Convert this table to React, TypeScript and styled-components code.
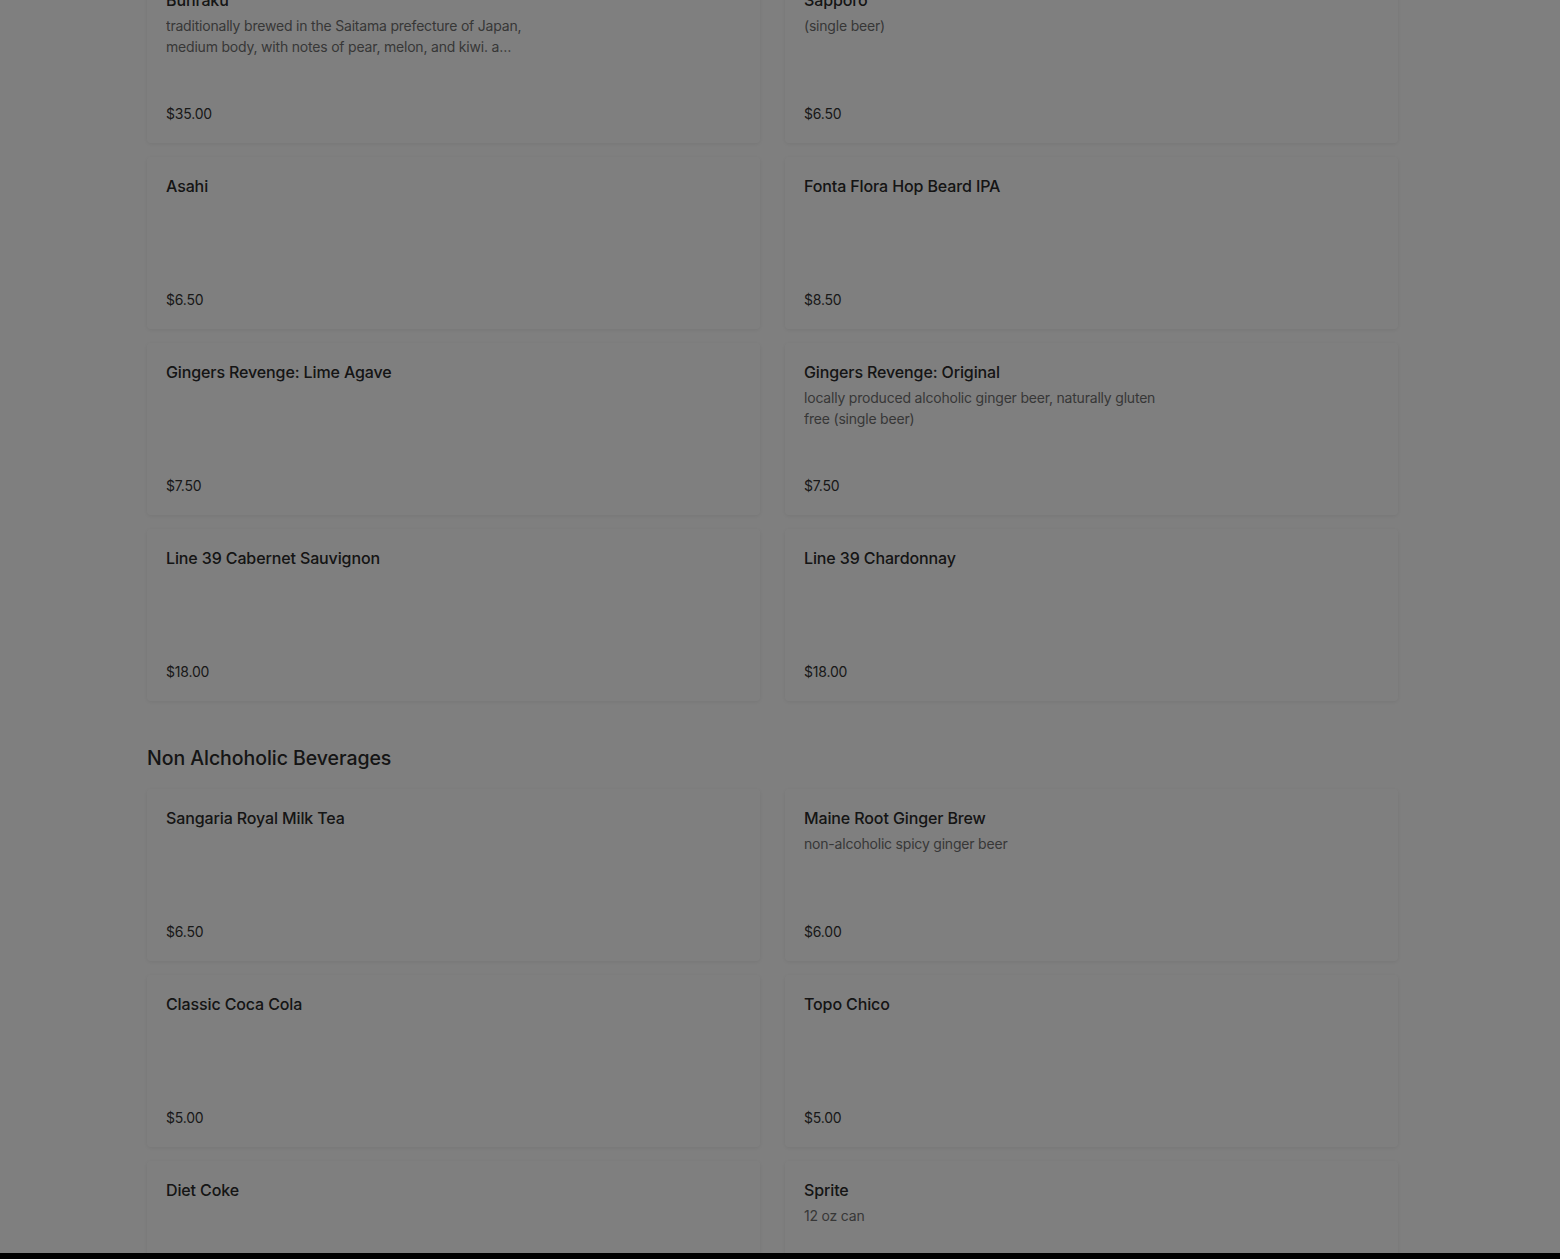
import { useLayoutEffect, useRef } from "react";
import styled, { createGlobalStyle } from "styled-components";

interface MenuItem {
  name: string;
  desc?: string;
  price: string;
}

interface Section {
  title: string;
  items: MenuItem[];
}

const sections: Section[] = [
  {
    title: "Beer, Wine & Sake",
    items: [
      {
        name: "Bunraku",
        desc: "traditionally brewed in the Saitama prefecture of Japan, medium body, with notes of pear, melon, and kiwi. a delicate, dry finish (300ml bottle)",
        price: "$35.00",
      },
      { name: "Sapporo", desc: "(single beer)", price: "$6.50" },
      { name: "Asahi", price: "$6.50" },
      { name: "Fonta Flora Hop Beard IPA", price: "$8.50" },
      { name: "Gingers Revenge: Lime Agave", price: "$7.50" },
      {
        name: "Gingers Revenge: Original",
        desc: "locally produced alcoholic ginger beer, naturally gluten free (single beer)",
        price: "$7.50",
      },
      { name: "Line 39 Cabernet Sauvignon", price: "$18.00" },
      { name: "Line 39 Chardonnay", price: "$18.00" },
    ],
  },
  {
    title: "Non Alchoholic Beverages",
    items: [
      { name: "Sangaria Royal Milk Tea", price: "$6.50" },
      {
        name: "Maine Root Ginger Brew",
        desc: "non-alcoholic spicy ginger beer",
        price: "$6.00",
      },
      { name: "Classic Coca Cola", price: "$5.00" },
      { name: "Topo Chico", price: "$5.00" },
      { name: "Diet Coke", price: "$5.00" },
      { name: "Sprite", desc: "12 oz can", price: "$5.00" },
    ],
  },
];

export default function App() {
  const pageRef = useRef<HTMLDivElement>(null);
  const firstCardRef = useRef<HTMLDivElement>(null);

  useLayoutEffect(() => {
    const page = pageRef.current;
    const card = firstCardRef.current;
    if (!page || !card) return;
    page.scrollTop = card.offsetTop - page.offsetTop + 29;
  }, []);

  return (
    <>
      <GlobalStyle />
      <Page ref={pageRef}>
        <Header>
          <Brand>Menu</Brand>
        </Header>
        <Container>
          {sections.map((section, si) => (
            <MenuSection key={section.title}>
              <SectionTitle>{section.title}</SectionTitle>
              <Grid>
                {section.items.map((item, i) => (
                  <Card
                    key={item.name}
                    ref={si === 0 && i === 0 ? firstCardRef : undefined}
                  >
                    <ItemName>{item.name}</ItemName>
                    {item.desc && <ItemDesc>{item.desc}</ItemDesc>}
                    <Price>{item.price}</Price>
                  </Card>
                ))}
              </Grid>
            </MenuSection>
          ))}
        </Container>
      </Page>
      <Overlay />
      <SheetEdge />
    </>
  );
}

const GlobalStyle = createGlobalStyle`
  html, body {
    margin: 0;
    padding: 0;
    height: 100%;
    overflow: hidden;
    background: #fff;
  }
  body {
    font-family: "Inter", "Noto Sans", sans-serif;
    -webkit-font-smoothing: antialiased;
  }
  * {
    box-sizing: border-box;
  }
`;

const Page = styled.div`
  height: 100vh;
  overflow: hidden;
  padding-right: 15px;
`;

const Header = styled.header`
  height: 72px;
  display: flex;
  align-items: center;
  padding: 0 32px;
  border-bottom: 1px solid #eee;
`;

const Brand = styled.div`
  font-size: 20px;
  font-weight: 600;
  color: #222;
`;

const Container = styled.main`
  max-width: 1251px;
  margin: 0 auto;
  padding-bottom: 80px;
`;

const MenuSection = styled.section`
  display: flex;
  flex-direction: column;
`;

const SectionTitle = styled.h2`
  margin: 43px 0 17px;
  font-size: 19.5px;
  line-height: 28px;
  font-weight: 500;
  letter-spacing: -0.05px;
  color: #2a2a2a;
`;

const Grid = styled.div`
  display: grid;
  grid-template-columns: 1fr 1fr;
  column-gap: 25px;
  row-gap: 14px;
`;

const Card = styled.div`
  height: 172px;
  display: flex;
  flex-direction: column;
  padding: 18px 19px 19px;
  background: #fff;
  border-radius: 4px;
  box-shadow: 0 1px 4px rgba(0, 0, 0, 0.08);
`;

const ItemName = styled.div`
  font-size: 16px;
  line-height: 22px;
  font-weight: 500;
  letter-spacing: -0.12px;
  color: #2a2a2a;
`;

const ItemDesc = styled.div`
  width: 370px;
  max-width: 100%;
  margin-top: 4px;
  font-size: 14px;
  line-height: 21px;
  letter-spacing: -0.2px;
  color: #6f6f6f;
  display: -webkit-box;
  -webkit-line-clamp: 2;
  -webkit-box-orient: vertical;
  overflow: hidden;
`;

const Price = styled.div`
  margin-top: auto;
  font-size: 14px;
  line-height: 20px;
  letter-spacing: -0.2px;
  color: #333;
`;

const Overlay = styled.div`
  position: fixed;
  inset: 0;
  background: rgba(0, 0, 0, 0.5);
`;

const SheetEdge = styled.div`
  position: fixed;
  left: 0;
  right: 0;
  bottom: 0;
  height: 6px;
  background: #000;
`;
